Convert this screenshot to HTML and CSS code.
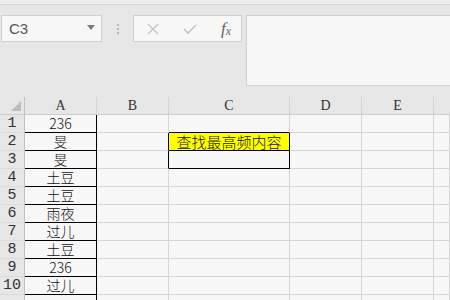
FILE: index.html
```html
<!DOCTYPE html>
<html lang="zh">
  <head>
    <meta charset="UTF-8" />
    <title>查找最高频内容</title>
    <link rel="stylesheet" href="styles.css">
  </head>
  <body>
    <div class="topline"></div>

    <div class="formula-bar">
      <div class="name-box">
        <span>C3</span>
        <svg class="caret" width="8" height="5" viewBox="0 0 8 5"><path d="M0 0H8L4 5Z" fill="#7a7a7a"/></svg>
      </div>
      <div class="grip"><i></i><i></i><i></i></div>
      <div class="fx-buttons">
        <svg width="12" height="12" viewBox="0 0 12 12"><path d="M1 1L11 11M11 1L1 11" stroke="#c4c4c4" stroke-width="1.4"/></svg>
        <svg width="14" height="12" viewBox="0 0 14 12"><path d="M1 6L5 10L13 2" stroke="#c4c4c4" stroke-width="1.6" fill="none"/></svg>
        <span class="fx">f<sub>x</sub></span>
      </div>
      <div class="formula-input"></div>
    </div>

    <div class="sheet">
      <div class="hd corner"><svg width="10" height="10" viewBox="0 0 10 10"><path d="M10 0V10H0Z" fill="#bdbdbd"/></svg></div>
      <div class="hd col">A</div>
      <div class="hd col">B</div>
      <div class="hd col">C</div>
      <div class="hd col">D</div>
      <div class="hd col">E</div>
      <div class="hd col last"></div>

      <div class="hd num">1</div>
      <div class="cell a">236</div>
      <div class="cell"></div>
      <div class="cell top-black"></div>
      <div class="cell"></div><div class="cell"></div><div class="cell"></div>

      <div class="hd num">2</div>
      <div class="cell a">旻</div>
      <div class="cell right-black"></div>
      <div class="cell box title">查找最高频内容</div>
      <div class="cell"></div><div class="cell"></div><div class="cell"></div>

      <div class="hd num">3</div>
      <div class="cell a">旻</div>
      <div class="cell right-black"></div>
      <div class="cell box"></div>
      <div class="cell"></div><div class="cell"></div><div class="cell"></div>

      <div class="hd num">4</div>
      <div class="cell a">土豆</div>
      <div class="cell"></div><div class="cell"></div><div class="cell"></div><div class="cell"></div><div class="cell"></div>

      <div class="hd num">5</div>
      <div class="cell a">土豆</div>
      <div class="cell"></div><div class="cell"></div><div class="cell"></div><div class="cell"></div><div class="cell"></div>

      <div class="hd num">6</div>
      <div class="cell a">雨夜</div>
      <div class="cell"></div><div class="cell"></div><div class="cell"></div><div class="cell"></div><div class="cell"></div>

      <div class="hd num">7</div>
      <div class="cell a">过儿</div>
      <div class="cell"></div><div class="cell"></div><div class="cell"></div><div class="cell"></div><div class="cell"></div>

      <div class="hd num">8</div>
      <div class="cell a">土豆</div>
      <div class="cell"></div><div class="cell"></div><div class="cell"></div><div class="cell"></div><div class="cell"></div>

      <div class="hd num">9</div>
      <div class="cell a">236</div>
      <div class="cell"></div><div class="cell"></div><div class="cell"></div><div class="cell"></div><div class="cell"></div>

      <div class="hd num">10</div>
      <div class="cell a">过儿</div>
      <div class="cell"></div><div class="cell"></div><div class="cell"></div><div class="cell"></div><div class="cell"></div>

      <div class="hd num"></div>
      <div class="cell a"></div>
      <div class="cell"></div><div class="cell"></div><div class="cell"></div><div class="cell"></div><div class="cell"></div>
    </div>
  </body>
</html>
```

FILE: styles.css
```css
/* Base */
html {
  overflow: hidden;
}

body {
  margin: 0;
  background-color: #e6e6e6;
  font-family: "Liberation Sans", "Noto Sans CJK SC", sans-serif;
  overflow: hidden;
  width: 450px;
  height: 300px;
}

.topline {
  height: 4px;
  background-color: #eeeeee;
  border-bottom: 1px solid #d8d8d8;
}

/* Formula bar */
.formula-bar {
  display: flex;
  align-items: flex-start;
  padding: 10px 0 0 1px;
  box-sizing: border-box;
  height: 81px;
}

.name-box {
  width: 101px;
  height: 27px;
  box-sizing: border-box;
  background-color: #f7f7f7;
  border: 1px solid #cfcfcf;
  display: flex;
  align-items: center;
  justify-content: space-between;
  padding: 0 6px 0 7px;
  font-size: 15px;
  color: #555;
}

.caret {
  margin-top: -2px;
}

.grip {
  width: 31px;
  height: 27px;
  display: flex;
  flex-direction: column;
  align-items: center;
  justify-content: center;
  gap: 2px;
}

.grip i {
  width: 2px;
  height: 2px;
  background-color: #b5b5b5;
}

.fx-buttons {
  width: 109px;
  height: 27px;
  box-sizing: border-box;
  background-color: #f7f7f7;
  border: 1px solid #cfcfcf;
  display: flex;
  align-items: center;
  justify-content: space-between;
  padding: 0 10px 0 13px;
}

.fx {
  font-family: "Liberation Serif", serif;
  font-style: italic;
  font-size: 17px;
  color: #666;
}

.fx sub {
  font-size: 12px;
  vertical-align: -1px;
}

.formula-input {
  margin-left: 4px;
  flex: 1;
  height: 71px;
  box-sizing: border-box;
  background-color: #f7f7f7;
  border: 1px solid #cfcfcf;
  border-right: none;
}

/* Sheet grid */
.sheet {
  margin-top: 11px;
  display: grid;
  grid-template-columns: 25px 72px 72px 121px 72px 72px 1fr;
  grid-auto-rows: 18px;
}

.hd {
  background-color: #e6e6e6;
  box-sizing: border-box;
  border-right: 1px solid #cdcdcd;
  border-bottom: 1px solid #cdcdcd;
  display: flex;
  align-items: center;
  justify-content: center;
  line-height: 16px;
  color: #333;
}

.corner {
  justify-content: flex-end;
  align-items: flex-end;
  padding: 0 3px 3px 0;
  border-right-color: #c0c0c0;
}

.col {
  font-family: "Liberation Serif", "Noto Sans CJK SC", serif;
  font-size: 14px;
  border-right-color: #d4d4d4;
}

.col.last {
  border-right: none;
}

.num {
  font-family: "Liberation Mono", monospace;
  font-size: 15px;
  border-right-color: #c0c0c0;
  border-bottom-color: #dcdcdc;
}

.cell {
  background-color: #f7f7f7;
  box-sizing: border-box;
  border-right: 1px solid #d6d6d6;
  border-bottom: 1px solid #d6d6d6;
  display: flex;
  align-items: center;
  justify-content: center;
  font-family: "Noto Sans CJK SC", sans-serif;
  font-size: 14px;
  font-weight: 300;
  line-height: 15px;
  color: #111;
  white-space: nowrap;
}

.cell.a {
  border-right-color: #000;
  border-bottom-color: #000;
}

.cell.top-black {
  border-bottom-color: #000;
}

.cell.right-black {
  border-right-color: #000;
}

.cell.box {
  border-right-color: #000;
  border-bottom-color: #000;
}

.title {
  background-color: #ffff00;
  font-size: 15px;
}
```
